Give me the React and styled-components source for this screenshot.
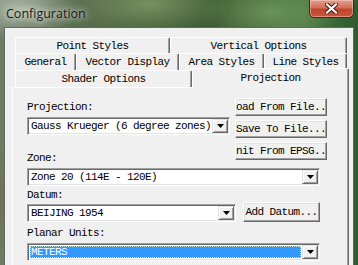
import React from "react";
import styled, { createGlobalStyle } from "styled-components";

const GlobalStyle = createGlobalStyle`
  html, body {
    margin: 0;
    padding: 0;
  }
  body {
    background: #3d5a3a;
  }
`;

const tabs = [
  [
    { label: "Point Styles", w: 155 },
    { label: "Vertical Options", w: 177 },
  ],
  [
    { label: "General", w: 61 },
    { label: "Vector Display", w: 103 },
    { label: "Area Styles", w: 85 },
    { label: "Line Styles", w: 83 },
  ],
];

const DropArrow = () => (
  <svg width="7" height="4" viewBox="0 0 7 4">
    <path d="M0 0h7L3.5 4z" fill="#000" />
  </svg>
);

const Combo = ({ value, width, selected }) => (
  <ComboBox $w={width}>
    <ComboField $selected={selected}>{value}</ComboField>
    <DropButton>
      <DropArrow />
    </DropButton>
  </ComboBox>
);

const App = () => {
  return (
    <>
      <GlobalStyle />
      <Screen>
        <TitleBar>
          <Title>Configuration</Title>
          <CloseButton>
            <svg width="13" height="11" viewBox="0 0 13 11">
              <path
                d="M2 1.5l9 8M11 1.5l-9 8"
                stroke="#3a1a14"
                strokeWidth="4"
                strokeLinecap="square"
              />
              <path
                d="M2 1.5l9 8M11 1.5l-9 8"
                stroke="#fff"
                strokeWidth="2.2"
                strokeLinecap="square"
              />
            </svg>
          </CloseButton>
        </TitleBar>
        <Frame>
          <Body>
            <TabArea>
              {tabs.map((row, i) => (
                <TabRow key={i} $h={i === 0 ? 16 : 17}>
                  {row.map(t => (
                    <Tab key={t.label} $w={t.w}>
                      {t.label}
                    </Tab>
                  ))}
                </TabRow>
              ))}
              <TabRow $h={17}>
                <Tab $w={177}>Shader Options</Tab>
                <ActiveTab>Projection</ActiveTab>
              </TabRow>
              <Panel>
                <TopSection>
                  <LeftCol>
                    <Label>Projection:</Label>
                    <Combo value="Gauss Krueger (6 degree zones)" />
                    <Label $gap={17}>Zone:</Label>
                  </LeftCol>
                  <ButtonCol>
                    <Button>Load From File...</Button>
                    <Button>Save To File...</Button>
                    <Button>Init From EPSG...</Button>
                  </ButtonCol>
                </TopSection>
                <Combo value="Zone 20 (114E - 120E)" />
                <Label $gap={3}>Datum:</Label>
                <DatumRow>
                  <Combo value="BEIJING 1954" width={209} />
                  <Button $w={77} $h={20}>
                    Add Datum...
                  </Button>
                </DatumRow>
                <Label $gap={5}>Planar Units:</Label>
                <Spacer />
                <Combo value="METERS" selected />
              </Panel>
            </TabArea>
          </Body>
        </Frame>
      </Screen>
    </>
  );
};

export default App;

const Screen = styled.div`
  width: 358px;
  height: 265px;
  overflow: hidden;
  display: flex;
  flex-direction: column;
  background:
    radial-gradient(ellipse 60px 30px at 20px 8px, rgba(190, 200, 185, 0.75), transparent),
    radial-gradient(ellipse 80px 30px at 150px 4px, rgba(150, 175, 120, 0.6), transparent),
    radial-gradient(ellipse 70px 30px at 270px 12px, rgba(120, 160, 100, 0.7), transparent),
    radial-gradient(ellipse 12px 80px at 2px 200px, rgba(110, 110, 90, 0.8), transparent),
    linear-gradient(90deg, #6f7d68 0%, #4c6440 35%, #3b5a32 60%, #4e7a44 85%, #2f5a2e 100%);
  font-family: "Liberation Mono", "DejaVu Sans Mono", monospace;
`;

const TitleBar = styled.div`
  height: 27px;
  flex-shrink: 0;
  display: flex;
  justify-content: space-between;
  align-items: flex-start;
  padding: 0 4px 0 6px;
`;

const Title = styled.div`
  font-family: "Open Sans", "Noto Sans", sans-serif;
  font-size: 12.5px;
  line-height: 27px;
  color: #1a1a1a;
  text-shadow: 0 0 6px rgba(255, 255, 255, 0.9), 0 0 10px rgba(255, 255, 255, 0.6);
`;

const CloseButton = styled.div`
  width: 45px;
  height: 19px;
  margin-top: -1px;
  box-sizing: border-box;
  display: flex;
  align-items: center;
  justify-content: center;
  border: 1px solid #5b1e14;
  border-radius: 0 0 5px 5px;
  background: linear-gradient(180deg, #e2a08f 0%, #d26e55 45%, #c0452c 55%, #c8583c 100%);
  box-shadow: inset 0 0 0 1px rgba(255, 220, 210, 0.45);
`;

const Frame = styled.div`
  flex: 1;
  display: flex;
  padding: 0 4px;
  min-height: 0;
`;

const Body = styled.div`
  flex: 1;
  background: #f0f0f0;
  border: 1px solid #5f6b5c;
  border-bottom: none;
  padding: 9px 0 0 7px;
  display: flex;
`;

const TabArea = styled.div`
  width: 337px;
  display: flex;
  flex-direction: column;
`;

const TabRow = styled.div`
  height: ${p => p.$h}px;
  flex-shrink: 0;
  display: flex;
  align-items: flex-start;
  padding: 0 2px 0 3px;
`;

const Tab = styled.div`
  width: ${p => p.$w}px;
  height: 100%;
  box-sizing: border-box;
  flex-shrink: 0;
  display: flex;
  align-items: center;
  justify-content: center;
  background: #f0f0f0;
  border-top: 1px solid #fff;
  border-left: 1px solid #fff;
  border-right: 1px solid #696969;
  border-radius: 2px 2px 0 0;
  box-shadow: inset -1px 0 #a0a0a0;
  font-size: 11px;
  letter-spacing: -0.6px;
  color: #000;
  white-space: nowrap;
`;

const ActiveTab = styled(Tab)`
  width: 157px;
  height: 20px;
  margin: -2px -2px -1px 0;
  padding-bottom: 2px;
  position: relative;
  z-index: 1;
`;

const Panel = styled.div`
  flex: 1;
  display: flex;
  flex-direction: column;
  border-top: 1px solid #fff;
  border-left: 1px solid #fff;
  border-right: 1px solid #696969;
  box-shadow: inset -1px 0 #a0a0a0;
  padding: 10px 0 0 14px;
`;

const TopSection = styled.div`
  width: 293px;
  display: flex;
  gap: 5px;
  align-items: flex-start;
`;

const LeftCol = styled.div`
  flex: 1;
  display: flex;
  flex-direction: column;
  padding-top: 3px;
`;

const ButtonCol = styled.div`
  width: 92px;
  display: flex;
  flex-direction: column;
  gap: 4px;
`;

const Label = styled.div`
  font-size: 11px;
  line-height: 13px;
  letter-spacing: -0.6px;
  color: #000;
  margin-top: ${p => p.$gap || 0}px;
  margin-bottom: 3px;
  white-space: nowrap;
`;

const Spacer = styled.div`
  height: 0;
`;

const DatumRow = styled.div`
  width: 293px;
  display: flex;
  align-items: flex-end;
  gap: 7px;
  margin-top: -3px;
`;

const Button = styled.div`
  width: ${p => p.$w || 92}px;
  height: ${p => p.$h || 18}px;
  box-sizing: border-box;
  flex-shrink: 0;
  display: flex;
  align-items: center;
  justify-content: center;
  overflow: hidden;
  white-space: nowrap;
  background: #f0f0f0;
  border: 1px solid;
  border-color: #fff #696969 #696969 #fff;
  box-shadow: inset -1px -1px #a0a0a0, inset 1px 1px #e3e3e3;
  font-size: 11px;
  letter-spacing: -0.6px;
  color: #000;
`;

const ComboBox = styled.div`
  width: ${p => (p.$w ? `${p.$w}px` : "100%")};
  max-width: 293px;
  height: 18px;
  box-sizing: border-box;
  flex-shrink: 0;
  display: flex;
  align-items: stretch;
  background: #fff;
  border: 1px solid;
  border-color: #a0a0a0 #fff #fff #a0a0a0;
  box-shadow: inset 1px 1px #696969, inset -1px -1px #e3e3e3;
  padding: 1px;
`;

const ComboField = styled.div`
  flex: 1;
  min-width: 0;
  overflow: hidden;
  white-space: nowrap;
  margin: 1px 1px 1px 1px;
  padding-left: 1px;
  font-size: 11px;
  line-height: 12px;
  letter-spacing: -0.6px;
  color: ${p => (p.$selected ? "#fff" : "#000")};
  background: ${p => (p.$selected ? "#3399ff" : "transparent")};
  outline: ${p => (p.$selected ? "1px dotted rgba(255, 255, 200, 0.7)" : "none")};
  outline-offset: -1px;
`;

const DropButton = styled.div`
  width: 16px;
  flex-shrink: 0;
  box-sizing: border-box;
  display: flex;
  align-items: center;
  justify-content: center;
  background: #f0f0f0;
  border: 1px solid;
  border-color: #e3e3e3 #696969 #696969 #e3e3e3;
  box-shadow: inset 1px 1px #fff, inset -1px -1px #a0a0a0;
`;
